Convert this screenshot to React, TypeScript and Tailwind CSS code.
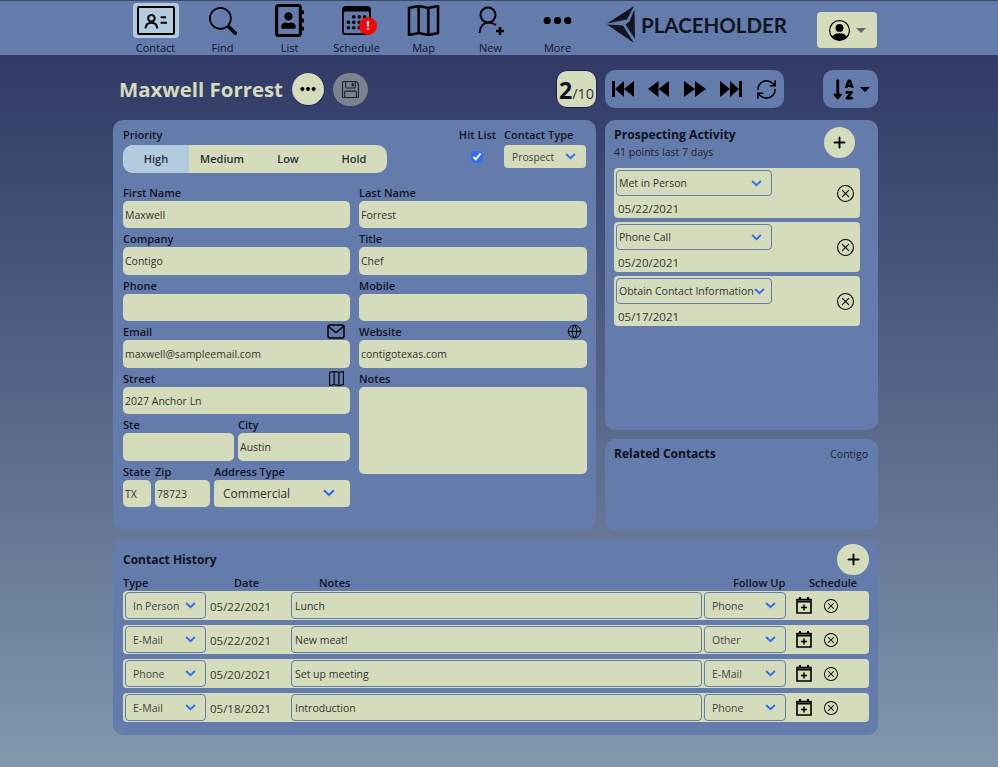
import {
  BsCalendar3,
  BsFloppy,
  BsMap,
  BsPersonCircle,
  BsPlusLg,
  BsSearch,
  BsThreeDots,
  BsXCircle,
} from "react-icons/bs";
import { FaRegAddressBook, FaSortAlphaDown } from "react-icons/fa";
import { Globe, RefreshCw } from "lucide-react";
import type { ReactNode } from "react";

function Chevron({ className = "" }: { className?: string }) {
  return (
    <svg viewBox="0 0 12 8" className={`w-[11px] h-[7px] shrink-0 ${className}`} fill="none" stroke="#2f6ff0" strokeWidth="2.2">
      <path d="M1 1.2 6 6l5-4.8" />
    </svg>
  );
}

function Caret({ className = "" }: { className?: string }) {
  return <span className={`w-0 h-0 border-x-[5px] border-x-transparent border-t-[5px] ${className}`} />;
}

function MediaIcon({ d }: { d: string }) {
  return (
    <svg viewBox="0 0 22 16" className="w-[22px] h-[16px] shrink-0" fill="#000">
      <path d={d} />
    </svg>
  );
}

function CalendarPlus() {
  return (
    <svg viewBox="0 0 16 17" className="w-[16px] h-[17px] shrink-0" fill="none" stroke="#000">
      <path d="M4 0v3M12 0v3" strokeWidth="2" />
      <path d="M1 2.500h14v13.500H1z" strokeWidth="1.600" />
      <path d="M1 4.500h14" strokeWidth="2" />
      <path d="M8 7.500v6M5 10.500h6" strokeWidth="1.500" />
    </svg>
  );
}

function NavItem({ label, icon, active }: { label: string; icon: ReactNode; active?: boolean }) {
  return (
    <div className="w-[67px] flex flex-col items-center">
      <div className={`w-[46px] h-[36px] rounded-[4px] flex items-center justify-center ${active ? "bg-[#b3cbde]" : ""}`}>
        {icon}
      </div>
      <span className="text-[11px] leading-[15px] mt-[2px] text-[#10131f]">{label}</span>
    </div>
  );
}

function Field({ label, value = "", icon, className = "" }: { label: string; value?: string; icon?: ReactNode; className?: string }) {
  return (
    <div className={`flex flex-col min-w-0 ${className}`}>
      <div className="h-[19px] flex items-end justify-between pb-[1px] text-[11px] leading-[14px] font-semibold text-[#10131f]">
        <span>{label}</span>
        {icon}
      </div>
      <input
        readOnly
        value={value}
        className="w-full h-[27.5px] rounded-[5px] bg-[#d5dcbb] px-[2px] pt-[1px] text-[10.500px] text-[#333] outline-none"
      />
    </div>
  );
}

function Activity({ label, date }: { label: string; date: string }) {
  return (
    <div className="h-[50px] w-[246px] rounded-[4px] bg-[#d5dcbb] pl-[2px] pt-[2px] flex justify-between">
      <div>
        <div className="w-[156px] h-[26px] rounded-[4px] border border-[#647cac] pl-[2px] pr-[9px] flex items-center justify-between text-[10.500px] text-[#333]">
          <span className="whitespace-nowrap pt-[2px]">{label}</span>
          <Chevron />
        </div>
        <div className="pl-[2px] mt-[5px] text-[11.500px] leading-[16px] text-[#333]">{date}</div>
      </div>
      <div className="pr-[6px] pt-[15px]">
        <BsXCircle className="w-[17px] h-[17px] text-black" />
      </div>
    </div>
  );
}

function CellSelect({ value, className = "" }: { value: string; className?: string }) {
  return (
    <div className={`h-[27px] shrink-0 rounded-[4px] border border-[#647cac] pl-[7px] pr-[9px] flex items-center justify-between text-[10.500px] text-[#444] ${className}`}>
      <span className="pt-[2px]">{value}</span>
      <Chevron />
    </div>
  );
}

function HistoryRow({ type, date, note, follow }: { type: string; date: string; note: string; follow: string }) {
  return (
    <div className="h-[29px] rounded-[4px] bg-[#d5dcbb] px-[2px] flex items-center text-[10.500px] text-[#333]">
      <CellSelect value={type} className="w-[81px]" />
      <div className="w-[85px] pl-[4px] pt-[2px] shrink-0 whitespace-nowrap text-[11.500px]">{date}</div>
      <div className="w-[411px] h-[27px] shrink-0 rounded-[4px] border border-[#647cac] pl-[3px] pt-[2px] flex items-center">{note}</div>
      <div className="w-[2px] shrink-0" />
      <CellSelect value={follow} className="w-[82px]" />
      <div className="pl-[10px] flex items-center">
        <CalendarPlus />
        <BsXCircle className="w-[14px] h-[14px] ml-[12px] text-black" />
      </div>
    </div>
  );
}

function Logo() {
  return (
    <div className="flex items-center w-[180px] h-[40px]">
      <svg viewBox="0 0 28 38" className="w-[28px] h-[38px] shrink-0" fill="#12151f">
        <path d="M0 17.500 27 0 20 13.500z" />
        <path d="M0 18.500 16 19.500 27 37z" />
        <path d="M27.500 3 22.500 15.500 18.500 18.500 28 33z" />
      </svg>
      <span className="ml-[6px] text-[20.500px] leading-none font-bold text-[#12151f] font-['Lato',sans-serif]">PLACEHOLDER</span>
    </div>
  );
}

const history = [
  { type: "In Person", date: "05/22/2021", note: "Lunch", follow: "Phone" },
  { type: "E-Mail", date: "05/22/2021", note: "New meat!", follow: "Other" },
  { type: "Phone", date: "05/20/2021", note: "Set up meeting", follow: "E-Mail" },
  { type: "E-Mail", date: "05/18/2021", note: "Introduction", follow: "Phone" },
];

export default function App() {
  return (
    <div className="w-[998px] h-[767px] overflow-hidden flex flex-col font-['Open_Sans','Noto_Sans',sans-serif] bg-gradient-to-b from-[#2b3360] to-[#8398ad]">
      {/* top bar */}
      <header className="h-[55px] shrink-0 bg-[#647cac] border-t border-[#3c4a63] flex">
        <nav className="ml-[122px] flex pt-[2px]">
          <NavItem
            label="Contact"
            active
            icon={
              <div className="w-[38px] h-[29px] border-[2.5px] border-black rounded-[2px] flex items-center justify-center">
                <svg viewBox="0 0 32 24" className="w-[30px] h-[22px]" fill="none" stroke="#000" strokeWidth="2.2">
                  <circle cx="11" cy="9" r="3.600" />
                  <path d="M4.500 20c.6-4.500 3-6 6.500-6s5.900 1.500 6.500 6" />
                  <path d="M21 8h6M21 14h7" />
                </svg>
              </div>
            }
          />
          <NavItem label="Find" icon={<BsSearch className="w-[28px] h-[28px] text-black" />} />
          <NavItem label="List" icon={<FaRegAddressBook className="w-[29px] h-[33px] text-black" />} />
          <NavItem
            label="Schedule"
            icon={
              <div className="relative">
                <BsCalendar3 className="w-[29px] h-[29px] text-black" />
                <span className="absolute left-[17px] top-[11px] w-[18px] h-[18px] rounded-full bg-[#f40606] text-white text-[12px] leading-[18px] font-bold text-center">!</span>
              </div>
            }
          />
          <NavItem label="Map" icon={<BsMap className="w-[33px] h-[31px] text-black stroke-[0.3px]" />} />
          <NavItem
            label="New"
            icon={
              <svg viewBox="0 0 30 32" className="w-[30px] h-[32px]" fill="none" stroke="#000" strokeWidth="2">
                <circle cx="12" cy="10" r="7.500" />
                <path d="M3.500 28C4 21 8 17.500 12 17.500c3 0 6 1 8 2.500" />
                <path d="M24 22v8M20 26h8" strokeWidth="2.500" />
              </svg>
            }
          />
          <NavItem label="More" icon={<BsThreeDots className="w-[33px] h-[33px] text-black stroke-[0.5px]" />} />
        </nav>
        <div className="ml-[16px] pt-[4px]">
          <Logo />
        </div>
        <div className="ml-[30px] mt-[11px] w-[60px] h-[36px] rounded-[4px] bg-[#d5dcbb] flex items-center justify-center gap-[6px]">
          <BsPersonCircle className="w-[21px] h-[21px] text-black" />
          <Caret className="border-t-[#666]" />
        </div>
      </header>

      <main className="w-[765px] ml-[113px] flex flex-col">
        {/* title row */}
        <div className="h-[38px] mt-[15px] flex items-center">
          <h1 className="ml-[6px] w-[164px] text-[20.400px] leading-none font-bold whitespace-nowrap text-[#d5dcbb]">Maxwell Forrest</h1>
          <button className="ml-[9px] w-[33px] h-[33px] rounded-full bg-[#d5dcbb] border-b border-r border-[#1a2060] flex items-center justify-center">
            <BsThreeDots className="w-[18px] h-[18px] text-black stroke-[0.6px]" />
          </button>
          <button className="ml-[8px] w-[35px] h-[33px] rounded-full bg-[#7a8290] flex items-center justify-center">
            <BsFloppy className="w-[17px] h-[17px] text-[#1b1f2b]" />
          </button>
          <div className="ml-[188px] w-[41px] h-[38px] rounded-[11px] bg-[#d5dcbb] border border-[#1a2060] flex items-baseline justify-center text-[#10131f]">
            <span className="text-[23px] leading-[38px] font-bold">2</span>
            <span className="text-[14.500px] text-[#333]">/10</span>
          </div>
          <div className="ml-[8px] w-[179px] h-[38px] rounded-[10px] bg-[#647cac] flex items-center pl-[7px] gap-[14px] text-black">
            <MediaIcon d="M0 0h3v16H0zM3 8l9-8v16zM12 8l10-8v16z" />
            <MediaIcon d="M0 8l10.500-8v16zM10.500 8 21 0v16z" />
            <MediaIcon d="M0 0l11 8-11 8zM11 0l11 8-11 8z" />
            <MediaIcon d="M0 0l10 8-10 8zM10 0l9 8-9 8zM19 0h3v16h-3z" />
            <RefreshCw className="w-[23px] h-[23px] -ml-[1px]" strokeWidth={1.6} />
          </div>
          <div className="ml-[39px] w-[55px] h-[38px] rounded-[10px] bg-[#647cac] flex items-center justify-center gap-[5px]">
            <FaSortAlphaDown className="w-[23px] h-[23px] text-black" />
            <Caret className="border-t-black" />
          </div>
        </div>

        <div className="mt-[12px] flex gap-[9px]">
          {/* contact form */}
          <section className="w-[483px] h-[410px] rounded-[10px] bg-[#647cac] px-[10px] pt-[6px]">
            <div className="flex">
              <div className="w-[264px]">
                <div className="h-[19px] text-[11px] leading-[18px] font-semibold text-[#10131f]">Priority</div>
                <div className="h-[28px] rounded-[10px] bg-[#d5dcbb] overflow-hidden flex text-[11px] font-semibold text-[#2a2d3a]">
                  <div className="w-[66px] bg-[#b3cbde] flex items-center justify-center">High</div>
                  <div className="w-[66px] flex items-center justify-center">Medium</div>
                  <div className="w-[66px] flex items-center justify-center">Low</div>
                  <div className="w-[66px] flex items-center justify-center">Hold</div>
                </div>
              </div>
              <div className="ml-[72px] w-[37px] flex flex-col items-center">
                <div className="h-[19px] text-[11px] leading-[18px] font-semibold whitespace-nowrap text-[#10131f]">Hit List</div>
                <input type="checkbox" readOnly checked className="mt-[6px] -ml-[2px] w-[12px] h-[12px] accent-[#2f6ff0]" />
              </div>
              <div className="ml-[8px] w-[83px]">
                <div className="h-[19px] text-[11px] leading-[18px] font-semibold whitespace-nowrap text-[#10131f]">Contact Type</div>
                <div className="h-[23px] rounded-[4px] bg-[#d5dcbb] pl-[8px] pr-[10px] flex items-center justify-between text-[10.300px] text-[#444]">
                  <span className="pt-[2px]">Prospect</span>
                  <Chevron />
                </div>
              </div>
            </div>

            <div className="mt-[8.500px] grid grid-cols-[227px_228px] gap-x-[9px]">
              <div className="flex flex-col">
                <Field label="First Name" value="Maxwell" />
                <Field label="Company" value="Contigo" />
                <Field label="Phone" />
                <Field
                  label="Email"
                  value="maxwell@sampleemail.com"
                  icon={
                    <svg viewBox="0 0 18 15" className="mr-[5px] w-[18px] h-[15px]" fill="none" stroke="#000" strokeWidth="1.500">
                      <rect x="1" y="1" width="16" height="13" rx="2" />
                      <path d="M1.500 2.500 9 8.500l7.500-6" />
                    </svg>
                  }
                />
                <Field label="Street" value="2027 Anchor Ln" icon={<BsMap className="mr-[6px] w-[15px] h-[15px] text-black stroke-[0.3px]" />} />
                <div className="flex gap-[4px]">
                  <Field label="Ste" className="w-[111px]" />
                  <Field label="City" value="Austin" className="w-[112px]" />
                </div>
                <div className="flex gap-[4px]">
                  <Field label="State" value="TX" className="w-[28px]" />
                  <Field label="Zip" value="78723" className="w-[55px]" />
                  <div className="w-[136px]">
                    <div className="h-[19px] pb-[1px] flex items-end text-[11px] leading-[14px] font-semibold whitespace-nowrap text-[#10131f]">Address Type</div>
                    <div className="h-[27.5px] rounded-[4px] bg-[#d5dcbb] pl-[9px] pr-[15px] flex items-center justify-between text-[12px] text-[#333]">
                      <span className="pt-[2px]">Commercial</span>
                      <Chevron className="w-[12px] h-[8px]" />
                    </div>
                  </div>
                </div>
              </div>
              <div className="flex flex-col">
                <Field label="Last Name" value="Forrest" />
                <Field label="Title" value="Chef" />
                <Field label="Mobile" />
                <Field label="Website" value="contigotexas.com" icon={<Globe className="mr-[5px] w-[15px] h-[15px] text-black" strokeWidth={1.6} />} />
                <div className="h-[19px] flex items-end pb-[1px] text-[11px] leading-[14px] font-semibold text-[#10131f]">Notes</div>
                <div className="h-[87px] rounded-[5px] bg-[#d5dcbb]" />
              </div>
            </div>
          </section>

          <div className="w-[273px] flex flex-col gap-[9px]">
            {/* activity */}
            <section className="h-[310px] rounded-[10px] bg-[#647cac] px-[9px] pt-[7px]">
              <div className="h-[41px] flex justify-between">
                <div>
                  <div className="text-[12.200px] leading-[16px] font-bold text-[#10131f]">Prospecting Activity</div>
                  <div className="mt-[2px] text-[10.500px] leading-[15px] text-[#1c2233]">41 points last 7 days</div>
                </div>
                <button className="mr-[14px] w-[31px] h-[31px] rounded-full bg-[#d5dcbb] flex items-center justify-center">
                  <BsPlusLg className="w-[15px] h-[15px] text-black stroke-[1px]" />
                </button>
              </div>
              <div className="flex flex-col gap-[4px]">
                <Activity label="Met in Person" date="05/22/2021" />
                <Activity label="Phone Call" date="05/20/2021" />
                <Activity label="Obtain Contact Information" date="05/17/2021" />
              </div>
            </section>
            {/* related */}
            <section className="h-[91px] rounded-[10px] bg-[#647cac] pl-[9px] pr-[10px] pt-[7px] flex justify-between">
              <span className="text-[12px] leading-[16px] font-bold text-[#10131f]">Related Contacts</span>
              <span className="text-[10.500px] leading-[16px] text-[#1c2233]">Contigo</span>
            </section>
          </div>
        </div>

        {/* history */}
        <section className="mt-[10px] h-[195px] rounded-[10px] bg-[#647cac] pl-[10px] pr-[9px] pt-[4px]">
          <div className="h-[31px] flex items-center justify-between">
            <span className="text-[12px] leading-[16px] font-bold text-[#10131f]">Contact History</span>
            <button className="w-[32px] h-[31px] rounded-full bg-[#d5dcbb] flex items-center justify-center">
              <BsPlusLg className="w-[15px] h-[15px] text-black stroke-[1px]" />
            </button>
          </div>
          <div className="h-[16px] flex text-[11px] leading-[16px] font-semibold text-[#10131f]">
            <span className="w-[111px]">Type</span>
            <span className="w-[85px]">Date</span>
            <span className="w-[414px]">Notes</span>
            <span className="w-[76px]">Follow Up</span>
            <span>Schedule</span>
          </div>
          <div className="flex flex-col gap-[5px]">
            {history.map((row, i) => (
              <HistoryRow key={i} {...row} />
            ))}
          </div>
        </section>
      </main>
    </div>
  );
}
